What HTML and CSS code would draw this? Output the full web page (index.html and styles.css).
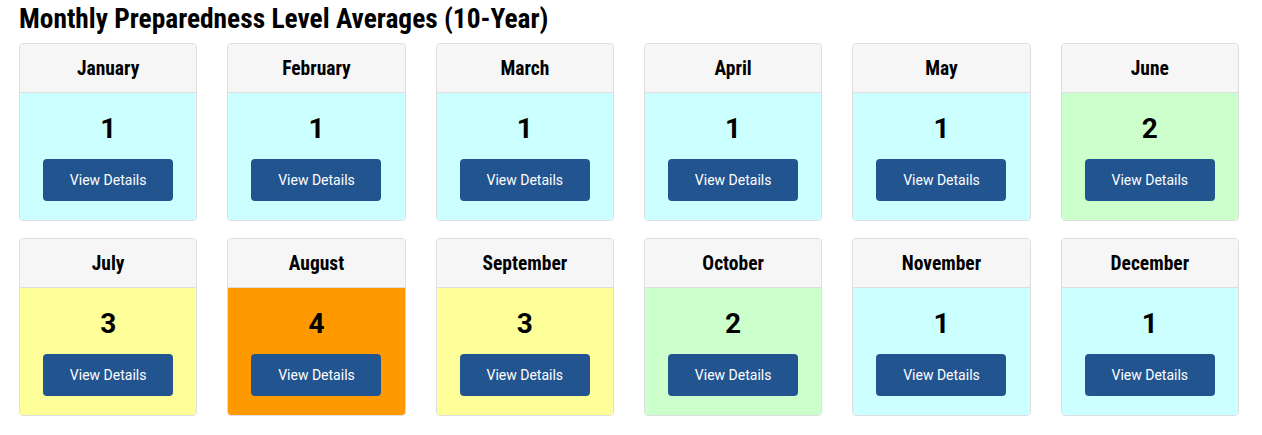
FILE: index.html
```html
<!DOCTYPE html>
<html lang="en">
<head>
<meta charset="utf-8">
<title>Monthly Preparedness Level Averages</title>
<link rel="stylesheet" href="styles.css">
</head>
<body>
<main class="page">
  <h3 class="title">Monthly Preparedness Level Averages (10-Year)</h3>
  <div class="grid">
    <div class="card pl1"><div class="card-head">January</div><div class="card-body"><div class="level">1</div><button class="btn">View Details</button></div></div>
    <div class="card pl1"><div class="card-head">February</div><div class="card-body"><div class="level">1</div><button class="btn">View Details</button></div></div>
    <div class="card pl1"><div class="card-head">March</div><div class="card-body"><div class="level">1</div><button class="btn">View Details</button></div></div>
    <div class="card pl1"><div class="card-head">April</div><div class="card-body"><div class="level">1</div><button class="btn">View Details</button></div></div>
    <div class="card pl1"><div class="card-head">May</div><div class="card-body"><div class="level">1</div><button class="btn">View Details</button></div></div>
    <div class="card pl2"><div class="card-head">June</div><div class="card-body"><div class="level">2</div><button class="btn">View Details</button></div></div>
    <div class="card pl3"><div class="card-head">July</div><div class="card-body"><div class="level">3</div><button class="btn">View Details</button></div></div>
    <div class="card pl4"><div class="card-head">August</div><div class="card-body"><div class="level">4</div><button class="btn">View Details</button></div></div>
    <div class="card pl3"><div class="card-head">September</div><div class="card-body"><div class="level">3</div><button class="btn">View Details</button></div></div>
    <div class="card pl2"><div class="card-head">October</div><div class="card-body"><div class="level">2</div><button class="btn">View Details</button></div></div>
    <div class="card pl1"><div class="card-head">November</div><div class="card-body"><div class="level">1</div><button class="btn">View Details</button></div></div>
    <div class="card pl1"><div class="card-head">December</div><div class="card-body"><div class="level">1</div><button class="btn">View Details</button></div></div>
  </div>
</main>
</body>
</html>
```

FILE: styles.css
```css
* { box-sizing: border-box; }
html, body { margin: 0; padding: 0; background: #fff; }
body { font-family: Roboto, "Liberation Sans", sans-serif; color: #000; }

.page { padding: 0 23px 0 19px; }

.title {
  margin: 0 0 7px;
  padding-top: 2px;
  font-family: "Roboto Condensed", Roboto, "Liberation Sans Narrow", sans-serif;
  font-stretch: 75%;
  font-weight: 700;
  font-size: 27.4px;
  line-height: 34px;
}

.grid {
  display: grid;
  grid-template-columns: repeat(6, 1fr);
  column-gap: 30px;
  row-gap: 17px;
}

.card {
  border: 1px solid #dedede;
  border-radius: 4px;
  overflow: hidden;
  text-align: center;
}

.card-head {
  height: 49px;
  display: flex;
  align-items: center;
  justify-content: center;
  background: #f6f6f6;
  border-bottom: 1px solid #dedede;
  font-family: "Roboto Condensed", Roboto, "Liberation Sans Narrow", sans-serif;
  font-stretch: 75%;
  font-weight: 700;
  font-size: 19.5px;
}

.card-body {
  padding: 19px 0 19px;
  display: flex;
  flex-direction: column;
  align-items: center;
}

.level {
  font-weight: 700;
  font-size: 28px;
  line-height: 34px;
  margin-bottom: 13px;
}

.btn {
  width: 130px;
  height: 42px;
  border: 0;
  border-radius: 4px;
  background: #225490;
  color: #fff;
  font-family: Roboto, "Liberation Sans", sans-serif;
  font-size: 14px;
  cursor: pointer;
}

.pl1 .card-body { background: #ccffff; }
.pl2 .card-body { background: #ccffcc; }
.pl3 .card-body { background: #ffff99; }
.pl4 .card-body { background: #ff9900; }
```
